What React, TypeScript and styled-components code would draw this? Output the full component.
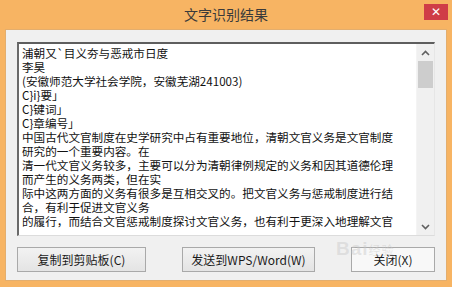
import React from 'react';
import styled, { createGlobalStyle } from 'styled-components';

const GlobalStyle = createGlobalStyle`
  html, body {
    margin: 0;
    padding: 0;
    background: #ffffff;
  }
  body {
    font-family: 'Noto Sans CJK SC', 'Noto Sans', sans-serif;
  }
`;

const FONT = `'Noto Sans CJK SC', 'Noto Sans', sans-serif`;

const Window = styled.div`
  width: 452px;
  height: 287px;
  box-sizing: border-box;
  background: #f7b463;
  display: flex;
  flex-direction: column;
  padding: 0 5px 6px 5px;
  position: relative;
`;

const TitleBar = {
  Container: styled.div`
    height: 29px;
    flex-shrink: 0;
    display: grid;
    grid-template-columns: 1fr auto 1fr;
    align-items: start;
  `,
  Title: styled.div`
    grid-column: 2;
    padding-top: 5px;
    font-family: ${FONT};
    font-size: 14px;
    line-height: 18px;
    color: #3a3a3a;
  `,
  Close: styled.div`
    grid-column: 3;
    justify-self: end;
    margin-top: 4px;
    margin-right: -1px;
    width: 24px;
    height: 16px;
    background: #cf3d47;
    display: flex;
    align-items: center;
    justify-content: center;
    color: #ffffff;
    font-family: 'DejaVu Sans', sans-serif;
    font-size: 12px;
    font-weight: bold;
    line-height: 16px;
  `,
};

const Panel = styled.div`
  flex: 1;
  background: #f0f0f0;
  border: 1px solid #e3ae6e;
  padding: 12px 11px 0 11px;
  display: flex;
  flex-direction: column;
  gap: 11px;
`;

const TextBox = styled.div`
  height: 194px;
  box-sizing: border-box;
  background: #ffffff;
  border-style: solid;
  border-width: 2px 1px 1px 2px;
  border-color: #5e5e5e #e6e6e6 #dcdcdc #6a6a6a;
  display: flex;
`;

const TextContent = styled.div`
  flex: 1;
  padding: 2px 0 0 3px;
  overflow: hidden;
`;

const Line = styled.div`
  font-family: ${FONT};
  font-size: 11.6px;
  line-height: 14px;
  height: 14px;
  color: #111111;
  white-space: nowrap;
`;

const ScrollBar = {
  Track: styled.div`
    width: 17px;
    flex-shrink: 0;
    background: #f0f0f0;
    border-left: 1px solid #f4f4f4;
    display: flex;
    flex-direction: column;
  `,
  Arrow: styled.div`
    height: 17px;
    display: flex;
    align-items: center;
    justify-content: center;
  `,
  Thumb: styled.div`
    height: 27px;
    margin: 0 1px;
    background: #cdcdcd;
  `,
  Space: styled.div`
    flex: 1;
  `,
};

const ButtonRow = styled.div`
  display: flex;
  justify-content: space-between;
`;

const Button = styled.div<{ w: number; light?: boolean }>`
  width: ${(p) => p.w}px;
  height: 25px;
  box-sizing: border-box;
  border: 1px solid #a9a9a9;
  background: ${(p) =>
    p.light
      ? '#f8f8f8'
      : 'linear-gradient(#f2f2f2, #e4e4e4)'};
  display: flex;
  align-items: center;
  justify-content: center;
  font-family: ${FONT};
  font-size: 12px;
  color: #1a1a1a;
`;

const Watermark = styled.div`
  position: absolute;
  left: 336px;
  top: 238px;
  font-family: 'Liberation Sans', sans-serif;
  font-size: 19px;
  font-weight: bold;
  color: rgba(200, 200, 200, 0.45);
  letter-spacing: 1px;
  pointer-events: none;
  span {
    font-family: ${FONT};
    font-size: 12px;
    font-weight: normal;
  }
`;

const Chevron: React.FC<{ up?: boolean }> = ({ up }) => (
  <svg width="9" height="6" viewBox="0 0 9 6">
    <path
      d={up ? 'M1 5 L4.5 1.5 L8 5' : 'M1 1 L4.5 4.5 L8 1'}
      fill="none"
      stroke="#606060"
      strokeWidth="1.6"
    />
  </svg>
);

const lines = [
  '浦朝又`目义夯与恶戒市日度',
  '李昊',
  '(安徽师范大学社会学院，安徽芜湖241003)',
  'C}i}要」',
  'C}键词」',
  'C}章编号」',
  '中国古代文官制度在史学研究中占有重要地位，清朝文官义务是文官制度',
  '研究的一个重要内容。在',
  '清一代文官义务较多，主要可以分为清朝律例规定的义务和因其道德伦理',
  '而产生的义务两类，但在实',
  '际中这两方面的义务有很多是互相交叉的。把文官义务与惩戒制度进行结',
  '合，有利于促进文官义务',
  '的履行，而结合文官惩戒制度探讨文官义务，也有利于更深入地理解文官',
];

export default function App() {
  return (
    <>
      <GlobalStyle />
      <Window>
        <TitleBar.Container>
          <TitleBar.Title>文字识别结果</TitleBar.Title>
          <TitleBar.Close>✕</TitleBar.Close>
        </TitleBar.Container>
        <Panel>
          <TextBox>
            <TextContent>
              {lines.map((l, i) => (
                <Line key={i}>{l}</Line>
              ))}
            </TextContent>
            <ScrollBar.Track>
              <ScrollBar.Arrow>
                <Chevron up />
              </ScrollBar.Arrow>
              <ScrollBar.Thumb />
              <ScrollBar.Space />
              <ScrollBar.Arrow>
                <Chevron />
              </ScrollBar.Arrow>
            </ScrollBar.Track>
          </TextBox>
          <ButtonRow>
            <Button w={129}>复制到剪贴板(C)</Button>
            <Button w={133}>发送到WPS/Word(W)</Button>
            <Button w={84} light>
              关闭(X)
            </Button>
          </ButtonRow>
        </Panel>
        <Watermark>
          Bai<span>经验</span>
        </Watermark>
      </Window>
    </>
  );
}
